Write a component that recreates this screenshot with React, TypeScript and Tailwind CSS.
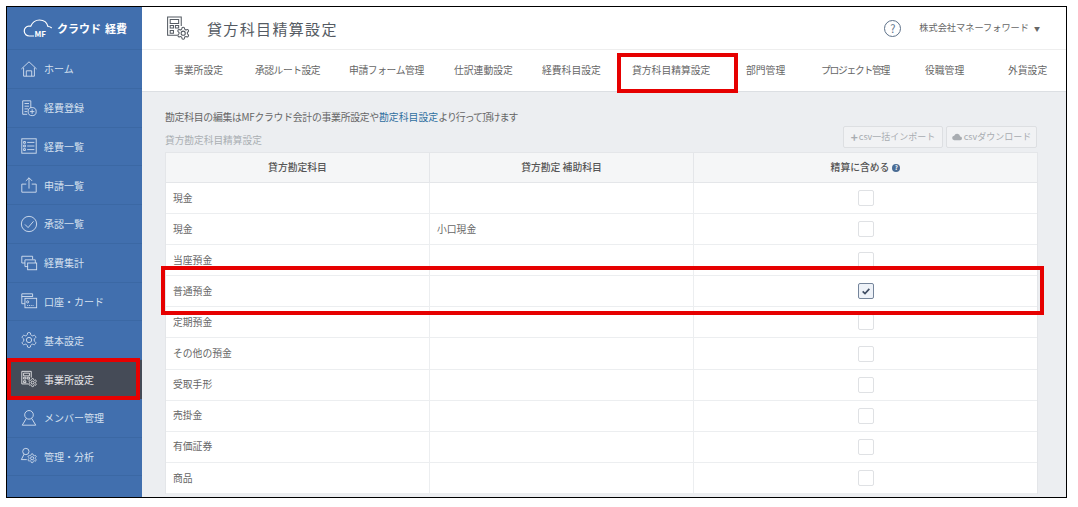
import React from "react";

const GEAR = "M12.22 2h-.44a2 2 0 0 0-2 2v.18a2 2 0 0 1-1 1.73l-.43.25a2 2 0 0 1-2 0l-.15-.08a2 2 0 0 0-2.73.73l-.22.38a2 2 0 0 0 .73 2.73l.15.1a2 2 0 0 1 1 1.72v.51a2 2 0 0 1-1 1.74l-.15.09a2 2 0 0 0-.73 2.73l.22.38a2 2 0 0 0 2.73.73l.15-.08a2 2 0 0 1 2 0l.43.25a2 2 0 0 1 1 1.73V20a2 2 0 0 0 2 2h.44a2 2 0 0 0 2-2v-.18a2 2 0 0 1 1-1.73l.43-.25a2 2 0 0 1 2 0l.15.08a2 2 0 0 0 2.73-.73l.22-.39a2 2 0 0 0-.73-2.73l-.15-.08a2 2 0 0 1-1-1.74v-.5a2 2 0 0 1 1-1.74l.15-.09a2 2 0 0 0 .73-2.73l-.22-.38a2 2 0 0 0-2.73-.73l-.15.08a2 2 0 0 1-2 0l-.43-.25a2 2 0 0 1-1-1.73V4a2 2 0 0 0-2-2z";

function Gear({ x, y, s, w = 1.5 }: { x: number; y: number; s: number; w?: number }) {
  return (
    <svg x={x} y={y} width={s} height={s} viewBox="0 0 24 24" fill="none" stroke="currentColor" strokeWidth={w}>
      <path d={GEAR} />
      <circle cx="12" cy="12" r="3.5" />
    </svg>
  );
}

function Svg({ children, className = "w-[18px] h-[18px] shrink-0" }: { children: React.ReactNode; className?: string }) {
  return (
    <svg viewBox="0 0 20 20" fill="none" stroke="currentColor" strokeWidth="1" className={className}>
      {children}
    </svg>
  );
}

function Building({ className, sw = 1 }: { className?: string; sw?: number }) {
  return (
    <Svg className={className}>
      <g strokeWidth={sw}>
        <path d="M9.500 15.500H2V1.500h10.500v7" />
        <path d="M4 3.500h6.500v3H4zM4 8h2.500v2H4zM8 8h2.500v2H8zM4 12h2.500v2H4z" />
      </g>
      <Gear x={8.500} y={8.500} s={11} w={sw * 2.2} />
    </Svg>
  );
}

const icons: Record<string, React.ReactNode> = {
  home: (
    <Svg>
      <path d="M1.500 10 10 2l8.500 8M4 8.500V18h12V8.500M7 18v-6h6v6" />
    </Svg>
  ),
  add: (
    <Svg>
      <path d="M12 10V2H3v15h5M5 5h5M5 8h5M5 11h4M5 14h3" />
      <circle cx="13.500" cy="14" r="4.500" />
      <path d="M13.500 11.500v5M11 14h5" />
    </Svg>
  ),
  list: (
    <Svg>
      <rect x="2" y="2" width="16" height="16" />
      <path d="M4 5h2v2H4zM4 9h2v2H4zM4 13h2v2H4zM8 6h8M8 10h8M8 14h8" />
    </Svg>
  ),
  upload: (
    <Svg>
      <path d="M7 9H2v9h16V9h-5M10 14V2M6.500 5.500 10 2l3.500 3.500" />
    </Svg>
  ),
  check: (
    <Svg>
      <circle cx="10" cy="10" r="8.500" />
      <path d="m5.500 10.500 3.500 3.500 6-7" />
    </Svg>
  ),
  stack: (
    <Svg>
      <path d="M14 6V2.500H2V10h3.500" />
      <path d="M17 10V6.500H5.500V14H9" />
      <rect x="8.500" y="10" width="10" height="7.500" />
    </Svg>
  ),
  card: (
    <Svg>
      <path d="M14 5.500V2H2v11h3.500M2 5h12" />
      <rect x="5.500" y="7" width="13" height="10.500" />
      <circle cx="8.500" cy="11" r="1.200" />
      <path d="M8 15h8" strokeDasharray="1 1" />
    </Svg>
  ),
  gear: (
    <Svg>
      <Gear x={0} y={0} s={20} w={1.200} />
    </Svg>
  ),
  building: <Building className="w-[18px] h-[18px] shrink-0" />,
  user: (
    <Svg>
      <circle cx="10" cy="6.500" r="4.800" />
      <path d="M7 10.500 2.500 18h15L13 10.500" />
    </Svg>
  ),
  admin: (
    <Svg>
      <circle cx="6.500" cy="5" r="3.500" />
      <path d="M4.500 8 1.500 14h6" />
      <Gear x={7.500} y={6.500} s={12} w={2} />
    </Svg>
  ),
};

const sideItems = [
  ["home", "ホーム"],
  ["add", "経費登録"],
  ["list", "経費一覧"],
  ["upload", "申請一覧"],
  ["check", "承認一覧"],
  ["stack", "経費集計"],
  ["card", "口座・カード"],
  ["gear", "基本設定"],
  ["building", "事業所設定"],
  ["user", "メンバー管理"],
  ["admin", "管理・分析"],
];

const rows = [
  ["現金", "", false],
  ["現金", "小口現金", false],
  ["当座預金", "", false],
  ["普通預金", "", true],
  ["定期預金", "", false],
  ["その他の預金", "", false],
  ["受取手形", "", false],
  ["売掛金", "", false],
  ["有価証券", "", false],
  ["商品", "", false],
] as const;

export default function App() {
  return (
    <div className="relative w-[1078px] h-[507px] bg-white overflow-hidden font-['Noto_Sans_CJK_JP','Noto_Sans',sans-serif]">
      <div className="absolute left-[6px] top-[6px] w-[1061px] h-[492px] border border-black flex overflow-hidden">
        <aside className="w-[135px] shrink-0 bg-[#416fae] text-[#d5e0ef]">
          <div className="h-[43px] flex items-center pl-[16px] text-white border-b border-[#3b68a4]">
            <svg viewBox="0 0 34 20" className="w-[34px] h-[20px] shrink-0" fill="none" stroke="currentColor" strokeWidth="1.200">
              <path d="M11 18H6.500a5 5 0 0 1-.5-10c.6 0 1.200.1 1.700.3C9.500 4 12.500 2 16.500 2c4.500 0 7.500 2.500 8.500 6.500 1.500 0 2.800.5 3.700 1.500" />
              <text x="11.500" y="18.500" fontSize="8" fontWeight="700" fill="currentColor" stroke="none">MF</text>
            </svg>
            <span className="text-[11px] font-bold leading-none">クラウド</span>
            <span className="text-[11px] font-bold leading-none ml-[4px]">経費</span>
          </div>
          {sideItems.map(([ic, label]) => (
            <div
              key={label}
              className={
                ic === "building"
                  ? "h-[38.75px] flex items-center pl-[13px] gap-[6px] bg-[#454b57] text-[#e8e8ea] text-[10px]"
                  : "h-[38.75px] flex items-center pl-[13px] gap-[6px] border-b border-[#3b68a4] text-[10px]"
              }
            >
              {icons[ic]}
              <span>{label}</span>
            </div>
          ))}
        </aside>
        <main className="flex-1 min-w-0 flex flex-col bg-[#eceef1]">
          <header className="h-[43px] shrink-0 bg-white flex items-center border-b border-[#eeeeee] pl-[23px] pr-[26px] text-[#555b63]">
            <Building className="w-[26px] h-[26px] text-[#555b63] shrink-0" sw={0.8} />
            <h1 className="ml-[16px] text-[15px] tracking-[1.35px] font-normal leading-none">貸方科目精算設定</h1>
            <div className="ml-auto w-[17px] h-[17px] rounded-full border border-[#5d7189] flex items-center justify-center text-[11px] leading-none text-[#5d7189]">?</div>
            <span className="ml-[18px] text-[9.200px] text-[#666]">株式会社マネーフォワード</span>
            <span className="ml-[5px] text-[6px] text-[#666]">▼</span>
          </header>
          <nav className="h-[42px] shrink-0 bg-white flex items-center border-b border-[#dcdfe3] pl-[32px] text-[9.800px] text-[#666] whitespace-nowrap">
            <span className="w-[81px]">事業所設定</span>
            <span className="w-[94px] tracking-[-0.5px]">承認ルート設定</span>
            <span className="w-[105px] tracking-[-0.4px]">申請フォーム管理</span>
            <span className="w-[88px]">仕訳連動設定</span>
            <span className="w-[90px]">経費科目設定</span>
            <span className="w-[114px]">貸方科目精算設定</span>
            <span className="w-[76px]">部門管理</span>
            <span className="w-[104px] tracking-[-1.300px] -ml-[1px]">プロジェクト管理</span>
            <span className="w-[83px]">役職管理</span>
            <span>外貨設定</span>
          </nav>
          <div className="flex-1 min-h-0 overflow-hidden pl-[23px] pr-[27px]">
            <p className="mt-[17px] h-[16px] text-[9.900px] leading-[16px] text-[#666] whitespace-nowrap">
              <span className="tracking-[-0.3px]">勘定科目の編集はMFクラウド会計の事業所設定や</span>
              <span className="text-[#2f6f9f]">勘定科目設定</span>
              <span className="tracking-[-1px]">より行って頂けます</span>
            </p>
            <div className="flex items-end h-[21px] -mt-[1px]">
              <span className="text-[9.700px] leading-[14px] text-[#aaaeb3] -mb-[2px]">貸方勘定科目精算設定</span>
              <div className="ml-auto flex gap-[3px] -mb-[3px] mr-[2px] text-[#a8acb1] text-[9px]">
                <span className="h-[22px] w-[100px] flex items-center justify-center rounded-[2px] border border-[#dddfe2] bg-[#f1f2f4]">
                  <b className="text-[12px] leading-none mr-[1px]">+</b>csv一括インポート
                </span>
                <span className="h-[22px] w-[91px] flex items-center justify-center rounded-[2px] border border-[#dddfe2] bg-[#f1f2f4]">
                  <svg viewBox="0 0 16 12" className="w-[10px] h-[8px] mr-[2px]" fill="currentColor"><path d="M4 11a3.500 3.500 0 0 1-.5-7A5 5 0 0 1 13 5a3 3 0 0 1 0 6z" /></svg>
                  csvダウンロード
                </span>
              </div>
            </div>
            <div className="mt-[7px] bg-white border-l border-r border-t border-[#e4e6e9] w-[873px]">
              <div className="grid grid-cols-[264px_264px_1fr] h-[30px] bg-[#f5f6f7] border-b border-[#e4e6e9] text-[9.800px] font-medium text-[#555]">
                <div className="flex items-center justify-center border-r border-[#e4e6e9]">貸方勘定科目</div>
                <div className="flex items-center justify-center border-r border-[#e4e6e9]">貸方勘定 補助科目</div>
                <div className="flex items-center justify-center gap-[3px]">
                  精算に含める
                  <span className="w-[8px] h-[8px] rounded-full bg-[#4a6c94] text-white text-[6px] leading-[8px] text-center font-bold">?</span>
                </div>
              </div>
              {rows.map(([a, b, on], i) => (
                <div key={i} className="grid grid-cols-[264px_264px_1fr] h-[31.1px] border-b border-[#eceef0] text-[9.800px] text-[#666]">
                  <div className="flex items-center pl-[7px] border-r border-[#eceef0]">{a}</div>
                  <div className="flex items-center pl-[7px] border-r border-[#eceef0]">{b}</div>
                  <div className="flex items-center justify-center">
                    {on ? (
                      <span className="w-[16px] h-[16px] rounded-[2px] border border-[#75859b] bg-[#eef2f8] flex items-center justify-center">
                        <svg viewBox="0 0 12 12" className="w-[10px] h-[10px]" fill="none" stroke="#3f4d63" strokeWidth="2"><path d="m2 6.500 2.800 2.700L10 3.500" /></svg>
                      </span>
                    ) : (
                      <span className="w-[16px] h-[16px] rounded-[2px] border border-[#dfe1e4] bg-white" />
                    )}
                  </div>
                </div>
              ))}
            </div>
          </div>
        </main>
      </div>
      {/* red annotation frames */}
      <div className="absolute left-[617px] top-[53px] w-[121px] h-[40px] border-[4px] border-[#e60000]" />
      <div className="absolute left-[7px] top-[358px] w-[133px] h-[42px] border-[4px] border-[#e60000]" />
      <div className="absolute left-[161px] top-[266px] w-[883px] h-[49px] border-[4px] border-[#e60000]" />
    </div>
  );
}
